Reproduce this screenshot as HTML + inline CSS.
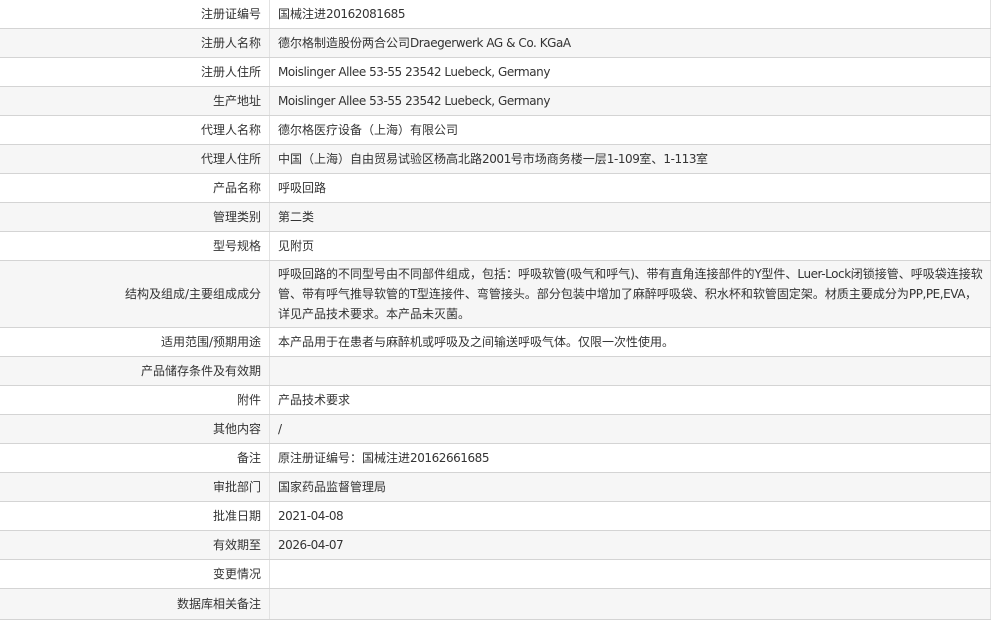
<!DOCTYPE html><html><head><meta charset="utf-8"><style>
body{margin:0;background:#fff;font-family:"DejaVu Sans","Noto Sans CJK SC",sans-serif;font-size:12px;color:#333}
table{border-collapse:collapse;width:991px;table-layout:fixed;position:absolute;left:0;top:0}
td{border-bottom:1px solid #d4d4d4;border-right:1px solid #e2e2e2;height:28px;padding:0 8px;line-height:20px;vertical-align:middle;white-space:nowrap;overflow:hidden}
td.l{width:253px;text-align:right}
tr:nth-child(even) td{background:#f6f6f6}
.s{letter-spacing:-0.45px}
</style></head><body><table>
<tr><td class="l">注册证编号</td><td>国械注进<span class="s">20162081685</span></td></tr>
<tr><td class="l">注册人名称</td><td>德尔格制造股份两合公司<span class="s">Draegerwerk AG &amp; Co. KGaA</span></td></tr>
<tr><td class="l">注册人住所</td><td class="s">Moislinger Allee 53-55 23542 Luebeck, Germany</td></tr>
<tr><td class="l">生产地址</td><td class="s">Moislinger Allee 53-55 23542 Luebeck, Germany</td></tr>
<tr><td class="l">代理人名称</td><td>德尔格医疗设备（上海）有限公司</td></tr>
<tr><td class="l">代理人住所</td><td>中国（上海）自由贸易试验区杨高北路<span class="s">2001</span>号市场商务楼一层<span class="s">1-109</span>室、<span class="s">1-113</span>室</td></tr>
<tr><td class="l">产品名称</td><td>呼吸回路</td></tr>
<tr><td class="l">管理类别</td><td>第二类</td></tr>
<tr><td class="l">型号规格</td><td>见附页</td></tr>
<tr><td class="l" style="height:66px">结构及组成/主要组成成分</td><td style="height:66px">呼吸回路的不同型号由不同部件组成，包括：呼吸软管<span class="s">(</span>吸气和呼气<span class="s">)</span>、带有直角连接部件的<span class="s">Y</span>型件、<span class="s">Luer-Lock</span>闭锁接管、呼吸袋连接软<br>管、带有呼气推导软管的<span class="s">T</span>型连接件、弯管接头。部分包装中增加了麻醉呼吸袋、积水杯和软管固定架。材质主要成分为<span class="s">PP,PE,EVA</span>，<br>详见产品技术要求。本产品未灭菌。</td></tr>
<tr><td class="l">适用范围/预期用途</td><td>本产品用于在患者与麻醉机或呼吸及之间输送呼吸气体。仅限一次性使用。</td></tr>
<tr><td class="l">产品储存条件及有效期</td><td></td></tr>
<tr><td class="l">附件</td><td>产品技术要求</td></tr>
<tr><td class="l">其他内容</td><td>/</td></tr>
<tr><td class="l">备注</td><td>原注册证编号：国械注进<span class="s">20162661685</span></td></tr>
<tr><td class="l">审批部门</td><td>国家药品监督管理局</td></tr>
<tr><td class="l">批准日期</td><td class="s">2021-04-08</td></tr>
<tr><td class="l">有效期至</td><td class="s">2026-04-07</td></tr>
<tr><td class="l">变更情况</td><td></td></tr>
<tr><td class="l" style="height:30px">数据库相关备注</td><td style="height:30px"></td></tr>
</table></body></html>
